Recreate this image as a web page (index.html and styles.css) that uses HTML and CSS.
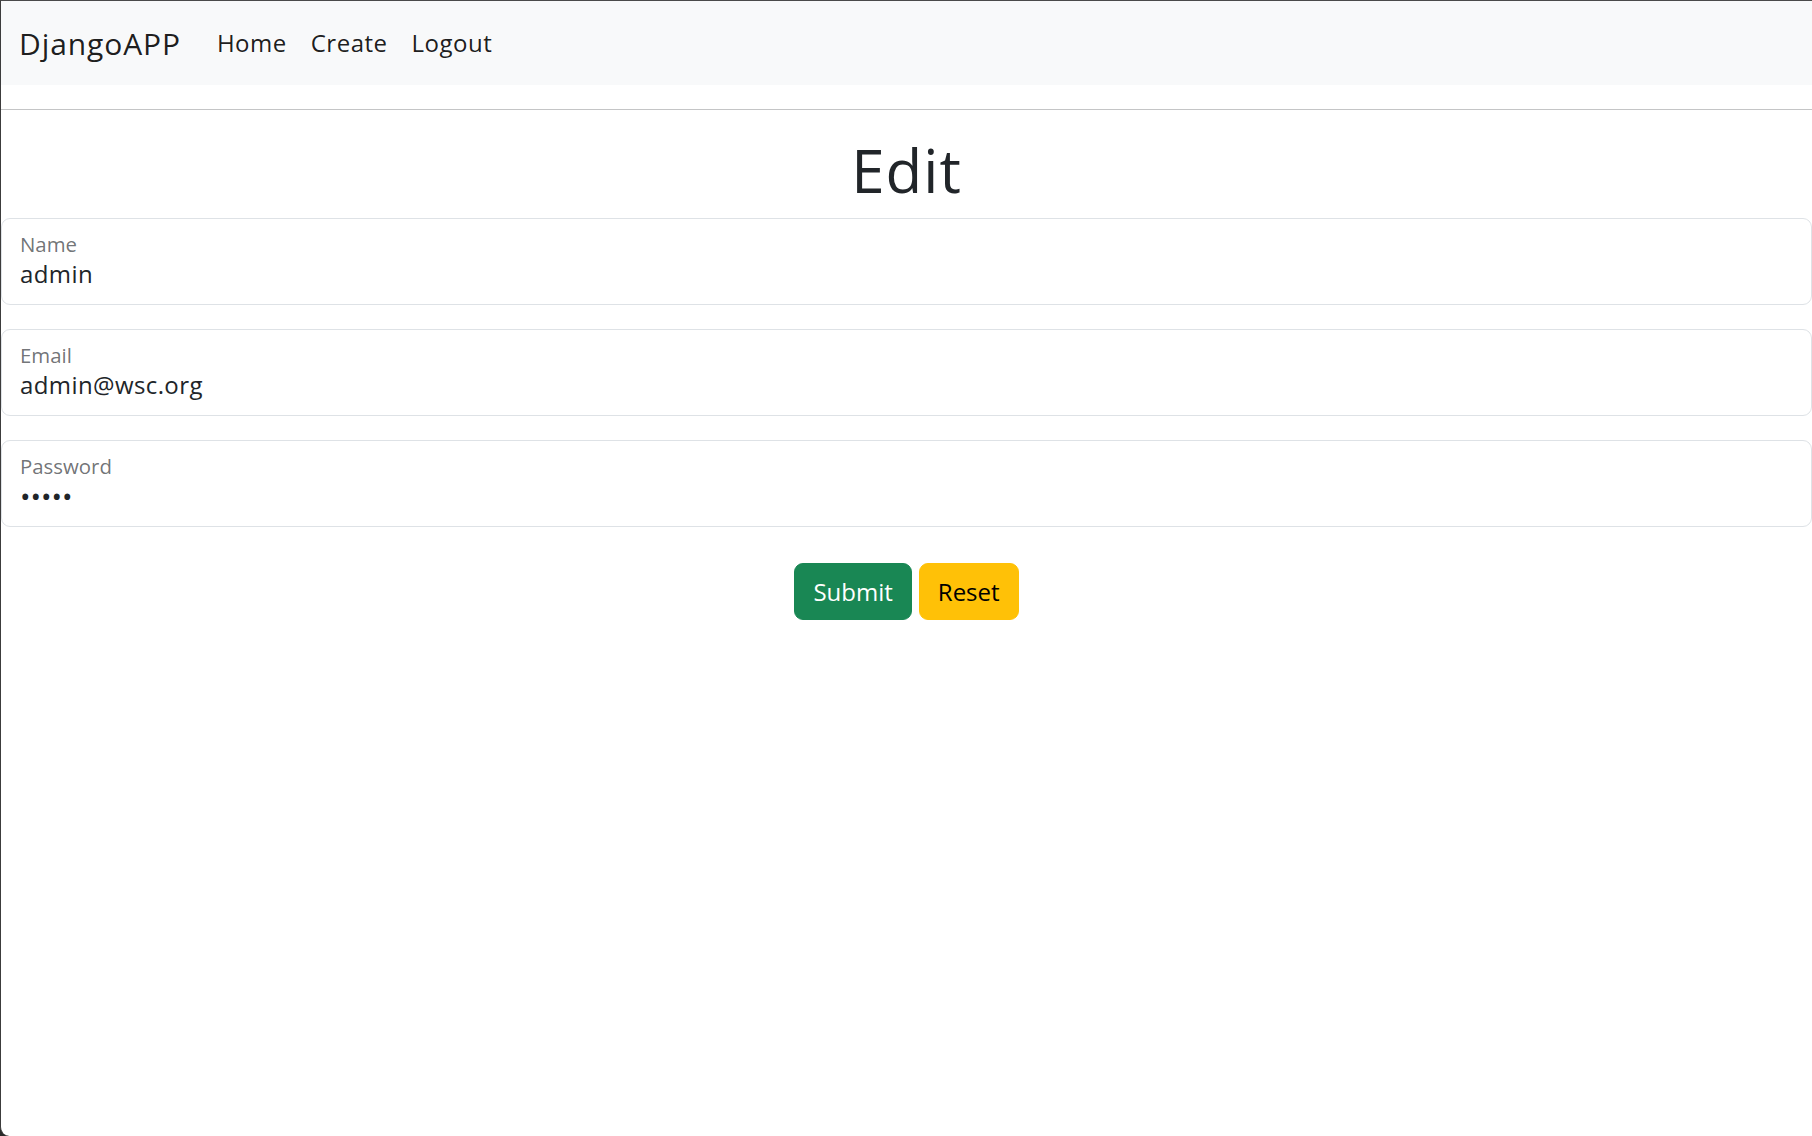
FILE: index.html
```html
<!DOCTYPE html>
<html lang="en">
<head>
<meta charset="utf-8">
<title>Edit</title>
<link rel="stylesheet" href="styles.css">
</head>
<body>
<div class="window">
  <nav class="navbar">
    <a class="brand" href="#">DjangoAPP</a>
    <ul class="nav">
      <li><a class="nav-link" href="#">Home</a></li>
      <li><a class="nav-link" href="#">Create</a></li>
      <li><a class="nav-link" href="#">Logout</a></li>
    </ul>
  </nav>
  <hr class="rule">
  <h1 class="title">Edit</h1>
  <form class="form">
    <div class="field">
      <input class="control" type="text" id="name" value="admin">
      <label class="field-label" for="name">Name</label>
    </div>
    <div class="field">
      <input class="control" type="email" id="email" value="admin@wsc.org">
      <label class="field-label" for="email">Email</label>
    </div>
    <div class="field">
      <input class="control control-secret" type="password" id="password" value="admin">
      <label class="field-label" for="password">Password</label>
    </div>
    <div class="actions">
      <button class="btn btn-success" type="submit">Submit</button>
      <button class="btn btn-warning" type="reset">Reset</button>
    </div>
  </form>
</div>
</body>
</html>
```

FILE: styles.css
```css
html {
  background: #2a2a2a;
  height: 100%;
}

body {
  margin: 0;
  height: 100%;
  font-family: "Open Sans", "Noto Sans", "Liberation Sans", sans-serif;
  font-size: 24px;
  line-height: 1.5;
  color: #212529;
}

.window {
  box-sizing: border-box;
  height: 100%;
  background: #ffffff;
  border-top: 1px solid #4a4a4a;
  border-left: 1px solid #3c3c3c;
  border-bottom-left-radius: 9px;
  overflow: hidden;
}

.navbar {
  display: flex;
  align-items: center;
  height: 84px;
  padding: 0 18px;
  background: #f8f9fa;
}

.brand {
  font-size: 30px;
  line-height: 45px;
  letter-spacing: 0.9px;
  color: rgba(0, 0, 0, 0.9);
  text-decoration: none;
  margin-right: 24px;
}

.nav {
  display: flex;
  list-style: none;
  margin: 0;
  padding: 0;
}

.nav-link {
  display: block;
  padding: 12px 12px;
  line-height: 36px;
  letter-spacing: 0.5px;
  color: rgba(0, 0, 0, 0.9);
  text-decoration: none;
}

.rule {
  margin: 24px 0;
  border: 0;
  border-top: 1px solid #c4c5c6;
  height: 0;
}

.title {
  margin: 0 0 12px;
  font-size: 60px;
  font-weight: 400;
  line-height: 72px;
  letter-spacing: 1px;
  text-align: center;
}

.form {
  margin: 0;
}

.field {
  position: relative;
  margin: 0 0 24px;
}

.control {
  display: block;
  box-sizing: border-box;
  width: 100%;
  height: 87px;
  margin: 0;
  padding: 39px 18px 15px;
  font-family: "Open Sans", "Noto Sans", "Liberation Sans", sans-serif;
  font-size: 24px;
  line-height: 36px;
  letter-spacing: 0.4px;
  color: #212529;
  background: #ffffff;
  border: 1px solid #dee2e6;
  border-radius: 9px;
  outline: none;
}

.control-secret {
  font-size: 28px;
  letter-spacing: 0;
}

.field-label {
  position: absolute;
  top: 11px;
  left: 19px;
  font-size: 20.4px;
  line-height: 30.6px;
  color: rgba(33, 37, 41, 0.65);
}

.actions {
  display: flex;
  justify-content: center;
  gap: 7px;
  padding-top: 12px;
}

.btn {
  box-sizing: border-box;
  height: 57px;
  padding: 0 18px;
  font-family: "Open Sans", "Noto Sans", "Liberation Sans", sans-serif;
  font-size: 24px;
  line-height: 36px;
  border: 1px solid transparent;
  border-radius: 9px;
  cursor: pointer;
}

.btn-success {
  background: #198754;
  border-color: #198754;
  color: #ffffff;
}

.btn-warning {
  background: #ffc107;
  border-color: #ffc107;
  color: #000000;
}
```
